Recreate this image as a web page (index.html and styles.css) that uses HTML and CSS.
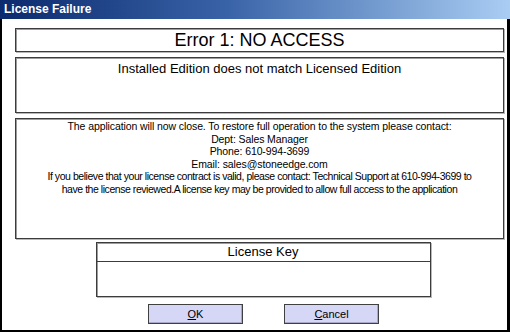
FILE: index.html
```html
<!DOCTYPE html>
<html lang="en">
<head>
    <meta charset="UTF-8">
    <title>License Failure</title>
    <link rel="stylesheet" href="styles.css">
</head>
<body>
    <div class="window">
        <div class="titlebar">License Failure</div>

        <div class="client">
            <!-- Error heading -->
            <div class="box box-error">Error 1: NO ACCESS</div>

            <!-- Edition mismatch -->
            <div class="box box-edition">Installed Edition does not match Licensed Edition</div>

            <!-- Contact info -->
            <div class="box box-message">
                The application will now close. To restore full operation to the system please contact:<br>
                Dept: Sales Manager<br>
                Phone: 610-994-3699<br>
                Email: sales@stoneedge.com<br>
                <span class="tight">If you believe that your license contract is valid, please contact: Technical Support at 610-994-3699 to<br>
                have the license reviewed.A license key may be provided to allow full access to the application</span>
            </div>

            <!-- License key entry -->
            <div class="box key-box">
                <div class="key-label">License Key</div>
                <div class="key-input"></div>
            </div>

            <div class="buttons">
                <button class="btn"><u>O</u>K</button>
                <button class="btn"><u>C</u>ancel</button>
            </div>
        </div>
    </div>
</body>
</html>
```

FILE: styles.css
```css
body {
    margin: 0;
    background: #fff;
    font-family: 'Liberation Sans', Arial, sans-serif;
    color: #000;
}
.window {
    width: 510px;
    height: 332px;
    box-sizing: border-box;
    display: flex;
    flex-direction: column;
    background: #fff;
    border-bottom: 2px solid #000;
    overflow: hidden;
}
.titlebar {
    height: 19px;
    line-height: 19px;
    padding-left: 4px;
    background: linear-gradient(90deg, #0c2a6e 0%, #3a64a8 45%, #a9cdf3 100%);
    color: #fff;
    font-weight: bold;
    font-size: 12px;
    flex-shrink: 0;
}
.client {
    flex: 1;
    display: flex;
    flex-direction: column;
    align-items: center;
    padding: 9px 3px 0 13px;
    border-left: 2px solid #000;
    border-right: 3px solid #000;
}
.box {
    box-sizing: border-box;
    width: 489px;
    border: 1px solid #3c3c3c;
    box-shadow: inset 1px 1px 0 #9c9c9c, 1px 1px 0 #b8b8b8;
    text-align: center;
    background: #fff;
}
.box-error {
    height: 24px;
    line-height: 22px;
    font-size: 18px;
}
.box-edition {
    margin-top: 5px;
    height: 56px;
    padding-top: 3px;
    font-size: 13px;
    line-height: 16px;
}
.box-message {
    margin-top: 5px;
    height: 121px;
    padding: 1px 2px 0;
    font-size: 10.5px;
    line-height: 12.6px;
    letter-spacing: -0.1px;
    white-space: nowrap;
}
.tight {
    letter-spacing: -0.45px;
}
.key-box {
    margin-top: 3px;
    width: 335px;
    height: 55px;
    margin-left: 7px;
    display: flex;
    flex-direction: column;
}
.key-label {
    height: 18px;
    line-height: 18px;
    font-size: 13px;
    border-bottom: 1px solid #3c3c3c;
}
.key-input {
    flex: 1;
}
.buttons {
    margin-top: 7px;
    display: flex;
    gap: 41px;
    margin-left: 8px;
}
.btn {
    width: 95px;
    height: 20px;
    padding: 0;
    background: #d6d6f6;
    border: 1px solid #404040;
    box-shadow: inset -1px -1px 0 #a8a8c8;
    font-family: 'Liberation Sans', Arial, sans-serif;
    font-size: 11px;
    color: #000;
}
```
